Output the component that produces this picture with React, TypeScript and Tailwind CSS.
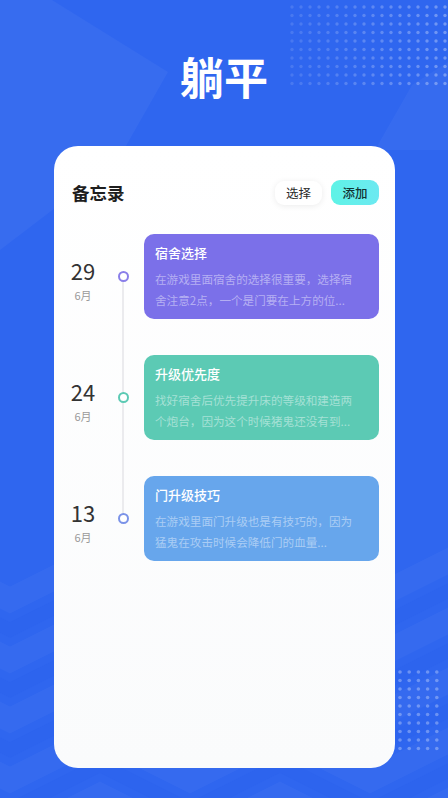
import React from "react";

const items = [
  {
    day: "29",
    title: "宿舍选择",
    desc: "在游戏里面宿舍的选择很重要，选择宿舍注意2点，一个是门要在上方的位...",
    bg: "bg-[#7b70e9]",
    ring: "border-[#8a7fe9]",
  },
  {
    day: "24",
    title: "升级优先度",
    desc: "找好宿舍后优先提升床的等级和建造两个炮台，因为这个时候猪鬼还没有到...",
    bg: "bg-[#5ccab4]",
    ring: "border-[#5ccab4]",
  },
  {
    day: "13",
    title: "门升级技巧",
    desc: "在游戏里面门升级也是有技巧的，因为猛鬼在攻击时候会降低门的血量...",
    bg: "bg-[#67a6ec]",
    ring: "border-[#7b93e8]",
  },
];

function Background() {
  const topDots: React.ReactNode[] = [];
  for (let c = 0; c < 18; c++) {
    for (let r = 0; r < 10; r++) {
      const x = 292 + c * 9;
      const y = 7 + r * 8.5;
      topDots.push(
        <circle key={`t${c}-${r}`} cx={x} cy={y} r={1.7} fill="#ffffff" opacity={0.12 + c * 0.012} />
      );
    }
  }
  const botDots: React.ReactNode[] = [];
  for (let c = 0; c < 5; c++) {
    for (let r = 0; r < 10; r++) {
      botDots.push(
        <circle key={`b${c}-${r}`} cx={400 + c * 9.2} cy={672 + r * 8.5} r={1.8} fill="#ffffff" opacity={0.3} />
      );
    }
  }
  const zig = (y0: number) => {
    const pts: string[] = [];
    for (let i = -2; i < 8; i++) {
      const x = 10 + i * 90;
      pts.push(`${x},${y0 + (i % 2 === 0 ? 0 : -45)}`);
    }
    return pts.join(" ");
  };
  const bands = [600, 660, 720, 780, 840];
  return (
    <svg className="absolute inset-0" width="448" height="798" viewBox="0 0 448 798">
      <rect width="448" height="798" fill="#2f66ef" />
      <polygon points="0,0 52,0 168,72 118,160 0,250" fill="#ffffff" opacity="0.04" />
      <polygon points="375,150 412,85 448,62 448,150" fill="#ffffff" opacity="0.035" />
      {bands.map((y) => (
        <polyline key={y} points={zig(y)} fill="none" stroke="#ffffff" strokeWidth="24" opacity="0.03" />
      ))}
      {bands.map((y) => (
        <polyline key={`d${y}`} points={zig(y + 30)} fill="none" stroke="#1a4fe0" strokeWidth="14" opacity="0.08" />
      ))}
      {topDots}
      {botDots}
    </svg>
  );
}

export default function App() {
  return (
    <div className="relative w-[448px] h-[798px] overflow-hidden bg-[#2f66ef] font-['Noto_Sans_CJK_SC','Noto_Sans',sans-serif]">
      <Background />
      <div className="relative flex flex-col">
        <div className="h-[146px] flex items-center justify-center pt-[6px]">
          <h1 className="text-[44px] leading-none font-bold text-white">躺平</h1>
        </div>
        <div className="ml-[54px] w-[341px] h-[622px] rounded-[24px] bg-gradient-to-b from-white to-[#fafbfc] flex flex-col">
          <div className="flex items-center justify-between pl-[18px] pr-[16px] pt-[34px]">
            <span className="text-[17.5px] leading-[24px] font-bold text-[#1e1e1e]">备忘录</span>
            <div className="flex items-center gap-[9px]">
              <button className="w-[47px] h-[24px] rounded-[9px] bg-white shadow-[0_1px_6px_rgba(0,0,0,0.08)] text-[12.5px] leading-[24px] text-[#2a2a2a]">
                选择
              </button>
              <button className="w-[48px] h-[25px] rounded-[9px] bg-gradient-to-r from-[#5ef3e6] to-[#6ce9f1] text-[12.5px] leading-[25px] text-[#123333] font-medium">
                添加
              </button>
            </div>
          </div>
          <div className="relative mt-[29px] flex flex-col gap-[36px]">
            <div className="absolute left-[68px] top-[43px] h-[242px] w-[2px] bg-[#ebebee]" />
            {items.map((it) => (
              <div key={it.day} className="flex items-center">
                <div className="w-[58px] flex flex-col items-center pt-[6px]">
                  <span className="text-[22px] leading-[26px] text-[#333333]">{it.day}</span>
                  <span className="mt-[4px] text-[11px] leading-[16px] text-[#9a9a9a]">6月</span>
                </div>
                <div className="w-[22px] flex justify-center relative">
                  <div className={`w-[11px] h-[11px] rounded-full border-2 bg-white ${it.ring}`} />
                </div>
                <div className={`ml-[10px] w-[235px] h-[85px] rounded-[10px] pt-[10px] pl-[11px] pr-[22px] ${it.bg}`}>
                  <div className="text-[13px] leading-[18px] font-medium text-white">{it.title}</div>
                  <div className="mt-[7px] text-[11.6px] leading-[21px] text-white/45">{it.desc}</div>
                </div>
              </div>
            ))}
          </div>
        </div>
      </div>
    </div>
  );
}
